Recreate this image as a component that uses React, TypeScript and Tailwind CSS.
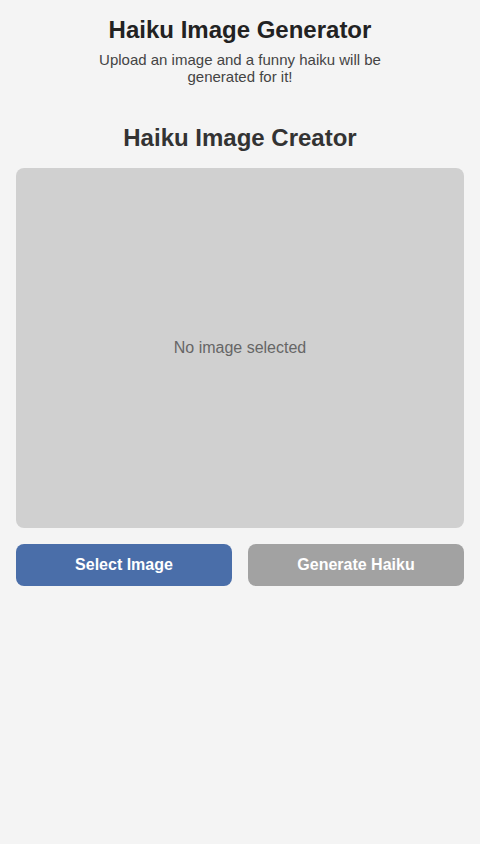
import React from 'react';

export default function App() {
  return (
    <div className="min-h-[844px] bg-[#f4f4f4] font-['Liberation_Sans',Arial,sans-serif]">
      {/* Header */}
      <header className="flex flex-col items-center px-4 pt-[15px] text-center">
        <h1 className="text-[24px] leading-[30px] font-bold text-[#222]">Haiku Image Generator</h1>
        <p className="mt-[6px] max-w-[300px] text-[15px] leading-[17px] text-[#444]">
          Upload an image and a funny haiku will be generated for it!
        </p>
      </header>

      <main className="px-4 pt-[38px]">
        <h2 className="text-center text-[24px] leading-[30px] font-bold text-[#333]">Haiku Image Creator</h2>

        {/* Preview area */}
        <div className="mt-[15px] flex h-[360px] items-center justify-center rounded-lg bg-[#d0d0d0]">
          <span className="text-[16px] text-[#666]">No image selected</span>
        </div>

        <div className="mt-4 flex gap-4">
          <button className="h-[42px] flex-1 rounded-lg bg-[#4a6ea9] text-[16px] font-bold text-white">
            Select Image
          </button>
          <button disabled className="h-[42px] flex-1 rounded-lg bg-[#a2a2a2] text-[16px] font-bold text-white">
            Generate Haiku
          </button>
        </div>
      </main>
    </div>
  );
}
